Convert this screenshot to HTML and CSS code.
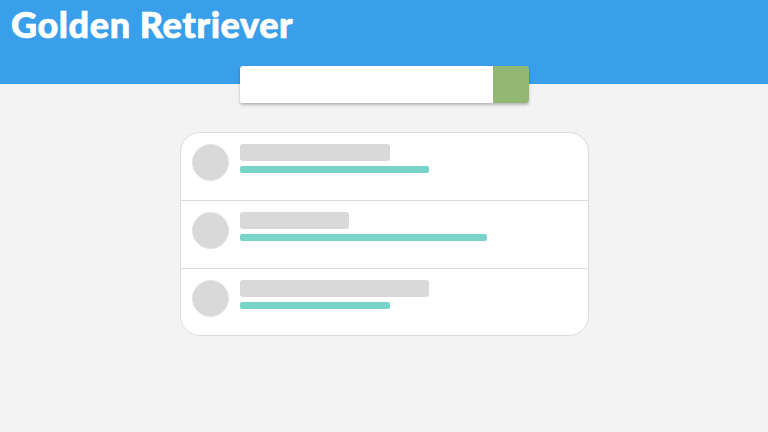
FILE: index.html
```html
<!DOCTYPE html>
<html>
<head>
<meta charset="utf-8">
<link rel="stylesheet" href="styles.css">
</head>
<body>
<header class="header">
  <h1 class="title">Golden Retriever</h1>
  <div class="search">
    <div class="search-input"></div>
    <div class="search-btn"></div>
  </div>
</header>
<main class="main">
  <div class="card">
    <div class="row">
      <div class="avatar"></div>
      <div class="lines">
        <div class="line-gray" style="width:150px"></div>
        <div class="line-teal" style="width:189px"></div>
      </div>
    </div>
    <div class="row">
      <div class="avatar"></div>
      <div class="lines">
        <div class="line-gray" style="width:109px"></div>
        <div class="line-teal" style="width:247px"></div>
      </div>
    </div>
    <div class="row">
      <div class="avatar"></div>
      <div class="lines">
        <div class="line-gray" style="width:189px"></div>
        <div class="line-teal" style="width:150px"></div>
      </div>
    </div>
  </div>
</main>
</body>
</html>
```
FILE: styles.css
```css
* { box-sizing: border-box; }
html, body { margin: 0; padding: 0; }
body {
  background: #f3f3f3;
  font-family: Lato, "Open Sans", sans-serif;
  width: 768px;
  height: 432px;
  overflow: hidden;
}
.header {
  background: #3a9fea;
  height: 84px;
  padding: 0 11px;
  display: flex;
  flex-direction: column;
}
.title {
  margin: 0;
  color: #fff;
  font-family: Lato, sans-serif;
  font-weight: 900;
  font-size: 36px;
  line-height: 48px;
  letter-spacing: 0.6px;
  -webkit-text-stroke: 0.7px #fff;
  flex: none;
}
.search {
  flex: none;
  display: flex;
  width: 289px;
  height: 37px;
  margin: 18px auto 0;
  border-radius: 3px;
  box-shadow: 0 2px 3px rgba(0,0,0,0.25);
  overflow: hidden;
}
.search-input { flex: 1; background: #fff; }
.search-btn { width: 36px; background: #93b874; }
.main {
  display: flex;
  justify-content: center;
  padding-top: 48px;
}
.card {
  width: 409px;
  background: #fff;
  border: 1px solid #dcdcdc;
  border-radius: 20px;
  overflow: hidden;
  position: relative;
  left: 0.5px;
}
.row {
  display: flex;
  gap: 11px;
  height: 68px;
  padding: 11px 11px 0;
  border-bottom: 1px solid #dcdcdc;
}
.row:last-child { border-bottom: none; height: 66px; }
.avatar {
  width: 37px;
  height: 37px;
  border-radius: 50%;
  background: #d9d9d9;
  border: 1px solid #e2e2e2;
  flex: none;
}
.lines { display: flex; flex-direction: column; gap: 5px; }
.line-gray {
  height: 17px;
  background: #d9d9d9;
  border-radius: 3px;
}
.line-teal {
  height: 7px;
  background: #78d3c8;
  border-radius: 2px;
}
```
